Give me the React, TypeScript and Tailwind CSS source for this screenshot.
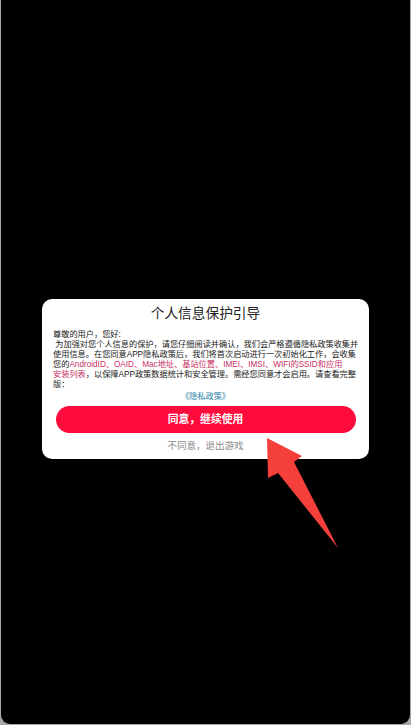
const cjk = "font-['Liberation_Sans','Noto_Sans_CJK_SC',sans-serif]";

const bodyLines = [
    <>尊敬的用户，您好:</>,
    <>&nbsp;为加强对您个人信息的保护，请您仔细阅读并确认，我们会严格遵循隐私政策收集并</>,
    <>使用信息。在您同意APP隐私政策后，我们将首次启动进行一次初始化工作，会收集</>,
    <>
        您的<span className="text-[#c92f62]">AndroidID、OAID、Mac地址、基站位置、IMEI、IMSI、WIFI的SSID和应用</span>
    </>,
    <>
        <span className="text-[#c92f62]">安装列表</span>，以保障APP政策数据统计和安全管理。需经您同意才会启用。请查看完整
    </>,
    <>版：</>,
];

const Arrow = () => (
    <svg className="absolute left-[260px] top-[430px]" width="90" height="125" viewBox="260 430 90 125">
        <path d="M267 438 L302 456 L294 462 L338 548 L278 473 L268 478 Z" fill="#f43f3b" />
    </svg>
);

export default function App() {
    return (
        <div className={`relative h-[725px] w-[411px] overflow-hidden bg-[#a8a8a8] px-px pb-px ${cjk}`}>
            <div className="h-full rounded-b-[9px] bg-black pl-[41px] pt-[299px]">
                <div className="flex h-[160px] w-[327px] flex-col items-center rounded-[10px] bg-white">
                    <h1 className="mt-[6px] text-[13.7px] font-normal leading-[18px] text-[#222222]">个人信息保护引导</h1>
                    <div className="mt-[7px] w-full whitespace-nowrap pl-[11px] text-[8.2px] leading-[10px] text-[#222222]">
                        {bodyLines.map((line, index) => (
                            <p key={index}>{line}</p>
                        ))}
                    </div>
                    <a className="mt-[2px] text-[8.2px] leading-[10px] text-[#2a7fa8]">《隐私政策》</a>
                    <button className="mt-[4px] flex h-[27px] w-[300px] items-center justify-center rounded-full bg-[#ff0a3c] text-[10.8px] font-bold text-white">
                        同意，继续使用
                    </button>
                    <button className="mt-[6px] text-[9.5px] leading-[14px] text-[#8a8a8a]">不同意，退出游戏</button>
                </div>
            </div>
            <Arrow />
        </div>
    );
}
